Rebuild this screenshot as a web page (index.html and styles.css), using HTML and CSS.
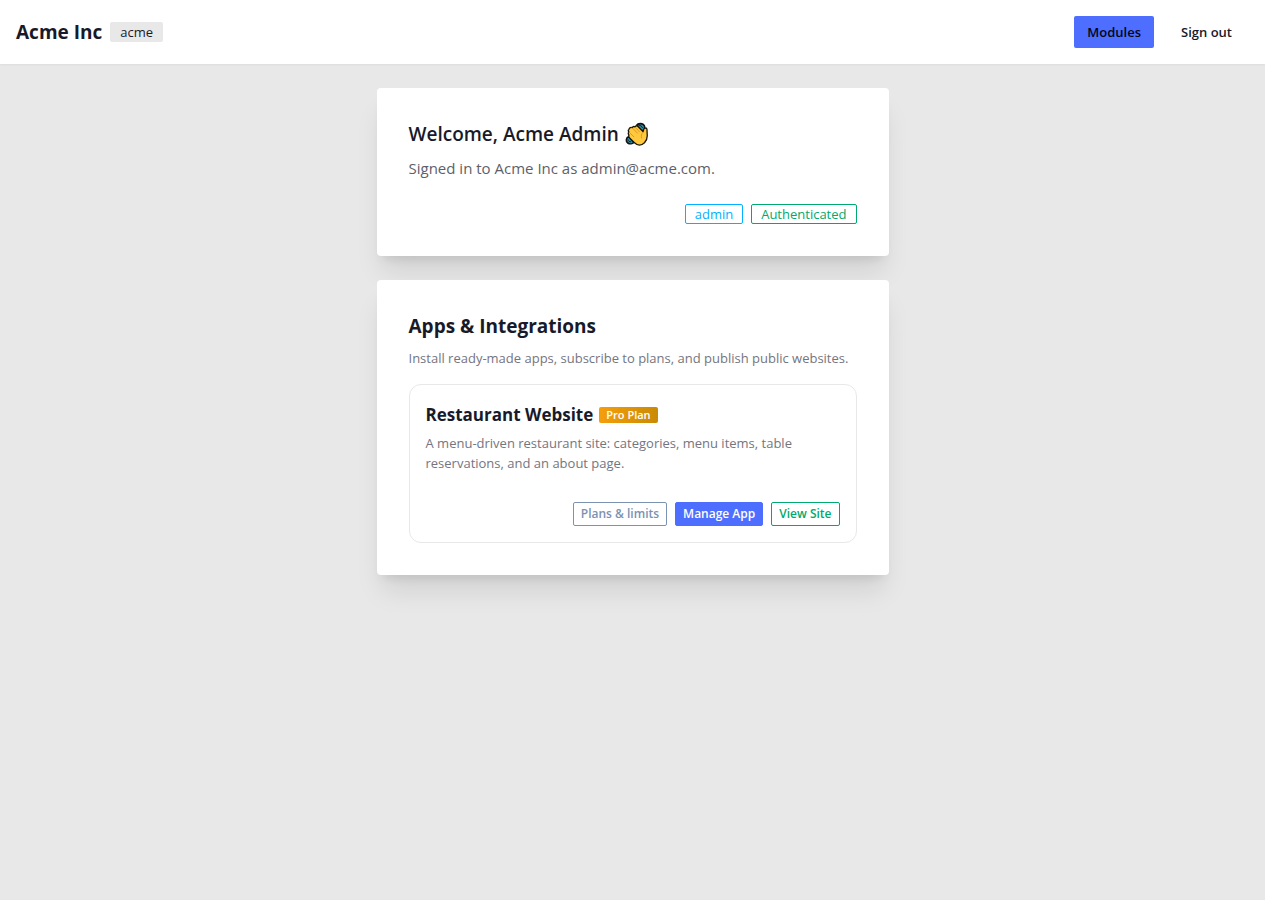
FILE: index.html
```
<!DOCTYPE html>
<html lang="en">
<head>
    <meta charset="UTF-8">
    <meta name="viewport" content="width=device-width, initial-scale=1.0">
    <title>Acme Inc</title>
    <link rel="stylesheet" href="styles.css">
</head>
<body>
    <!-- Navbar -->
    <header class="navbar">
        <div class="brand">
            <span class="brand-name">Acme Inc</span>
            <span class="badge badge-ghost">acme</span>
        </div>
        <nav class="nav-links">
            <a class="nav-btn nav-btn-primary" href="/modules">Modules</a>
            <button class="nav-btn" type="button">Sign out</button>
        </nav>
    </header>

    <main class="content">
        <!-- Welcome card -->
        <section class="card">
            <h1 class="card-title welcome-title">
                Welcome, Acme Admin
                <svg class="wave" viewBox="0 0 24 24" role="img" aria-label="waving hand">
                    <path d="M11.500 3.500C13 1 18 .8 19.500 4L19.800 8 16 9z" fill="#2f8ba6" stroke="#111" stroke-width="1.600" stroke-linejoin="round"/>
                    <path d="M4 14.500C.8 15.500.6 19.500 2.800 21 4.800 22.300 7.500 22 8.800 20.500z" fill="#2f8ba6" stroke="#111" stroke-width="1.600" stroke-linejoin="round"/>
                    <path d="M13.500 3.400C15.500 3.200 17 4.200 17.500 6M3 17.500c.2 1.500 1.300 2.300 3 2.300" stroke="#111" stroke-width=".9" fill="none"/>
                    <path d="M4 7.200C3 8.100 3.200 9.200 4 10.100 3 11 3.200 12.200 4 13.100 3.200 14.100 3.900 15.200 4.800 16.100L9.500 20.800C12.500 23.700 16.500 23.700 19.500 20.800 22 18.300 22.500 15.500 22.200 12.500L22 7.500C21.800 5.400 19 5.600 18.600 7.700L18.200 9.700 13 4.500C11.900 3.500 10.600 3.700 10 4.900 8.900 4.100 7.700 4.500 7.300 5.700 5.900 5.100 4.400 5.700 4 7.200z" fill="#ffc83d" stroke="#1a1608" stroke-width="1.300" stroke-linejoin="round"/>
                    <path d="M10 5.200l4.600 4.700M7.300 6l5.200 5.200M4.300 10.300l4.500 4.500M18.200 10c-2 2-2.400 4-1.600 6" fill="none" stroke="#d9921c" stroke-width=".9" stroke-linecap="round"/>
                </svg>
            </h1>
            <p class="lead">Signed in to Acme Inc as admin@acme.com.</p>
            <div class="actions">
                <span class="badge badge-info">admin</span>
                <span class="badge badge-success">Authenticated</span>
            </div>
        </section>

        <!-- Apps card -->
        <section class="card">
            <h2 class="card-title">Apps &amp; Integrations</h2>
            <p class="muted">Install ready-made apps, subscribe to plans, and publish public websites.</p>
            <article class="app">
                <div class="app-header">
                    <h3 class="app-name">Restaurant Website</h3>
                    <span class="plan">Pro Plan</span>
                </div>
                <p class="app-text">A menu-driven restaurant site: categories, menu items, table reservations, and an about page.</p>
                <div class="app-actions">
                    <button class="btn btn-plans" type="button">Plans &amp; limits</button>
                    <a class="btn btn-primary" href="/manage">Manage App</a>
                    <a class="btn btn-success" href="/site">View Site</a>
                </div>
            </article>
        </section>
    </main>
</body>
</html>
```
FILE: styles.css
```
* {
    box-sizing: border-box;
}

html {
    background: white;
    padding-right: 15px; /* scrollbar gutter */
}

body {
    margin: 0;
    min-height: 100vh;
    background: #e8e8e8;
    color: #181a2a;
    font-family: "Segoe UI", "Open Sans", "Noto Sans", sans-serif;
    font-size: 14px;
    line-height: 20px;
}

h1, h2, h3, p {
    margin: 0;
}

a {
    text-decoration: none;
}

/* Navbar */
.navbar {
    display: flex;
    align-items: center;
    justify-content: space-between;
    height: 64px;
    padding: 0 20px 0 16px;
    background: white;
    box-shadow: 0 1px 2px rgba(0, 0, 0, 0.05);
}

.brand {
    display: flex;
    align-items: center;
    gap: 8px;
}

.brand-name {
    font-size: 19px;
    font-weight: 700;
    line-height: 28px;
}

.nav-links {
    display: flex;
    gap: 14px;
}

.nav-btn {
    height: 32px;
    padding: 0 13px;
    border: none;
    border-radius: 2px;
    background: none;
    color: #181a2a;
    font-family: inherit;
    font-size: 13px;
    font-weight: 600;
    line-height: 32px;
    cursor: pointer;
}

.nav-btn-primary {
    background: #4d6eff;
    color: #050617;
}

/* Badges */
.badge {
    height: 20px;
    padding: 0 9px;
    border: 1px solid;
    border-radius: 2px;
    font-size: 13px;
    line-height: 18px;
}

.badge-ghost {
    background: #e8e8e8;
    border-color: #e8e8e8;
}

.badge-info {
    color: #00b2ff;
}

.badge-success {
    color: #00a96e;
}

/* Cards */
.content {
    display: flex;
    flex-direction: column;
    gap: 24px;
    width: 100%;
    max-width: 512px;
    margin: 0 auto;
    padding: 24px 0;
}

.card {
    padding: 32px;
    border-radius: 4px;
    background: white;
    box-shadow: 0 20px 25px -5px rgba(0, 0, 0, 0.1), 0 8px 10px -6px rgba(0, 0, 0, 0.1);
}

.card-title {
    margin-bottom: 8px;
    font-size: 19px;
    font-weight: 700;
    line-height: 28px;
}

.welcome-title {
    display: flex;
    align-items: center;
    gap: 6px;
    font-weight: 600;
}

.wave {
    width: 24px;
    height: 24px;
}

.lead {
    color: #5d5f6a;
    font-size: 15px;
    line-height: 24px;
}

.actions {
    display: flex;
    justify-content: flex-end;
    gap: 8px;
    margin-top: 24px;
}

.muted,
.app-text {
    color: #74757f;
    font-size: 13px;
}

/* App box */
.app {
    margin-top: 16px;
    padding: 16px;
    border: 1px solid #e8e8e8;
    border-radius: 12px;
}

.app-header {
    display: flex;
    align-items: center;
    gap: 6px;
    margin-bottom: 4px;
}

.app-name {
    font-size: 17px;
    font-weight: 700;
    line-height: 28px;
}

.plan {
    height: 16px;
    padding: 0 7px;
    border-radius: 2px;
    background: linear-gradient(90deg, #f59e0b, #ca8a04);
    color: white;
    font-size: 11px;
    font-weight: 600;
    line-height: 16px;
}

.app-actions {
    display: flex;
    flex-wrap: wrap;
    justify-content: flex-end;
    gap: 8px;
    margin-top: 29px;
}

.btn {
    height: 24px;
    padding: 0 7px;
    border: 1px solid;
    border-radius: 2px;
    background: none;
    font-family: inherit;
    font-size: 12px;
    font-weight: 600;
    line-height: 22px;
    cursor: pointer;
}

.btn-plans {
    color: #7b92b2;
}

.btn-primary {
    background: #4d6eff;
    border-color: #4d6eff;
    color: white;
}

.btn-success {
    color: #00a96e;
}
```
